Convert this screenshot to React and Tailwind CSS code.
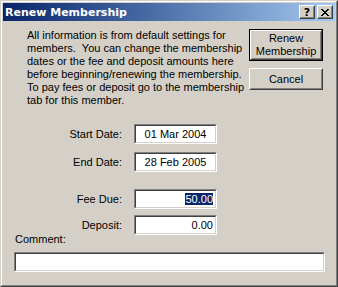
import React from "react";

const Sunken = ({ className = "", innerClassName = "", children }) => (
	<div
		className={`border border-t-[#808080] border-l-[#808080] border-b-white border-r-white ${className}`}
	>
		<div
			className={`w-full h-full bg-white border border-t-[#404040] border-l-[#404040] border-b-[#d4d0c8] border-r-[#d4d0c8] flex items-center ${innerClassName}`}
		>
			{children}
		</div>
	</div>
);

const Raised = ({ className = "", children }) => (
	<div
		className={`border border-t-white border-l-white border-b-[#404040] border-r-[#404040] ${className}`}
	>
		<div className="w-full h-full border border-t-[#d4d0c8] border-l-[#d4d0c8] border-b-[#808080] border-r-[#808080] flex flex-col items-center justify-center">
			{children}
		</div>
	</div>
);

const FieldRow = ({ label, className = "", children }) => (
	<div className={`flex items-center h-[20px] ${className}`}>
		<span className="w-[119px] text-right">{label}</span>
		<Sunken className="ml-[12px] w-[83px] h-[20px]" innerClassName="px-[2px]">
			{children}
		</Sunken>
	</div>
);

const TitleButton = ({ children }) => (
	<div className="w-[16px] h-[14px] bg-[#d4d0c8] border border-t-white border-l-white border-b-[#404040] border-r-[#404040]">
		<div className="w-full h-full border border-t-[#d4d0c8] border-l-[#d4d0c8] border-b-[#808080] border-r-[#808080] flex items-center justify-center">
			{children}
		</div>
	</div>
);

export default function App() {
	return (
		<div className="w-[338px] h-[287px] bg-[#d4d0c8] font-['Liberation_Sans',sans-serif] text-[11px] leading-[13px] text-black border border-t-[#d4d0c8] border-l-[#d4d0c8] border-b-[#404040] border-r-[#404040]">
			<div className="w-full h-full border border-t-white border-l-white border-b-[#808080] border-r-[#808080] p-px flex flex-col">
				{/* title bar */}
				<div className="h-[18px] flex items-center pl-[2px] pr-[2px] bg-gradient-to-r from-[#0a246a] to-[#a6caf0]">
					<span className="flex-1 text-white font-bold font-['DejaVu_Sans',sans-serif] text-[11px] leading-[13px]">
						Renew Membership
					</span>
					<TitleButton>
						<span className="font-['DejaVu_Sans',sans-serif] font-bold text-[11px] leading-none">?</span>
					</TitleButton>
					<div className="w-[2px]" />
					<TitleButton>
						<svg width="8" height="7" viewBox="0 0 8 7" shapeRendering="crispEdges">
							<path
								d="M0 0h2v1h-2zM6 0h2v1h-2zM1 1h2v1h-2zM5 1h2v1h-2zM2 2h4v1h-4zM3 3h2v1h-2zM2 4h4v1h-4zM1 5h2v1h-2zM5 5h2v1h-2zM0 6h2v1h-2zM6 6h2v1h-2z"
								fill="#000"
							/>
						</svg>
					</TitleButton>
				</div>

				{/* body */}
				<div className="flex-1 flex flex-col">
					<div className="flex mt-[8px]">
						<div className="flex-1">
							<p className="pl-[24px]">
								All information is from default settings for
								<br />
								members.&nbsp; You can change the membership
								<br />
								dates or the fee and deposit amounts here
								<br />
								before beginning/renewing the membership.
								<br />
								To pay fees or deposit go to the membership
								<br />
								tab for this member.
							</p>
							<FieldRow label="Start Date:" className="mt-[17px]">
								<span className="w-full text-center">01 Mar 2004</span>
							</FieldRow>
							<FieldRow label="End Date:" className="mt-[8px]">
								<span className="w-full text-center">28 Feb 2005</span>
							</FieldRow>
							<FieldRow label="Fee Due:" className="mt-[17px]">
								<span className="w-full text-right">
									<span className="bg-[#0a246a] text-white">50.00</span>
								</span>
							</FieldRow>
							<FieldRow label="Deposit:" className="mt-[6px]">
								<span className="w-full text-right">0.00</span>
							</FieldRow>
						</div>
						<div className="w-[74px] mr-[12px] flex flex-col gap-[7px]">
							<div className="border border-black h-[32px]">
								<Raised className="w-full h-full">
									<span>Renew</span>
									<span>Membership</span>
								</Raised>
							</div>
							<Raised className="w-full h-[22px]">
								<span>Cancel</span>
							</Raised>
						</div>
					</div>
					<span className="ml-[12px] mt-[-2px]">Comment:</span>
					<Sunken className="ml-[11px] mt-[6px] w-[311px] h-[20px]" />
				</div>
			</div>
		</div>
	);
}
